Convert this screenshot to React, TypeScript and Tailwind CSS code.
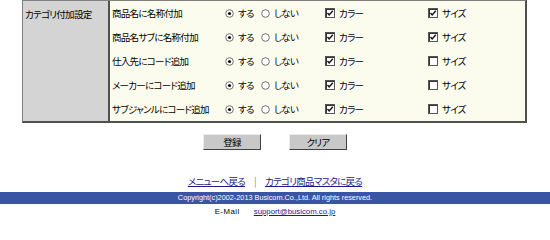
import React from 'react';

const jp = "font-['Noto_Sans_CJK_JP','Noto_Sans',sans-serif] [font-feature-settings:'palt']";

interface Row {
  name: string;
  color: boolean;
  size: boolean;
}

const rows: Row[] = [
  { name: '商品名に名称付加', color: true, size: true },
  { name: '商品名サブに名称付加', color: true, size: true },
  { name: '仕入先にコード追加', color: true, size: false },
  { name: 'メーカーにコード追加', color: true, size: false },
  { name: 'サブジャンルにコード追加', color: true, size: false },
];

function Radio({ checked }: { checked: boolean }) {
  return (
    <svg width="9" height="9" viewBox="0 0 9 9" className="shrink-0">
      <circle cx="4.5" cy="4.5" r="3.8" fill="#fff" stroke="#6f6f6f" strokeWidth="1" />
      {checked && <circle cx="4.5" cy="4.5" r="1.6" fill="#111" />}
    </svg>
  );
}

function Check({ checked }: { checked: boolean }) {
  return (
    <svg width="10" height="10" viewBox="0 0 10 10" className="shrink-0">
      <rect x="0.5" y="0.5" width="9" height="9" fill="#fff" stroke="#555" />
      <path d="M1 1.5H9M1.5 1V9" stroke="#333" strokeWidth="1" />
      {checked && <path d="M2.5 5 L4.2 7 L7.8 2.8" fill="none" stroke="#111" strokeWidth="1.4" />}
    </svg>
  );
}

export default function App() {
  return (
    <div className={`w-[550px] h-[228px] bg-white text-black text-[9.5px] leading-[12px] tracking-[-0.7px] overflow-hidden ${jp}`}>
      {/* settings table */}
      <div className="ml-[22px] w-[505px] flex border-t border-l border-[#808080] border-r-2 border-b-2 border-r-[#505050] border-b-[#505050]">
        <div className="w-[87px] shrink-0 bg-[#d4d4d4] border-r-2 border-[#505050] pl-[2px] pt-[7px]">
          カテゴリ付加設定
        </div>
        <div className="flex-1 bg-[#fcfcee]">
          {rows.map((r) => (
            <div key={r.name} className="h-[24px] grid grid-cols-[115px_36px_64px_103px_1fr] items-center">
              <span className="pl-[2px] whitespace-nowrap">{r.name}</span>
              <span className="flex items-center gap-[4px]">
                <Radio checked />
                <span>する</span>
              </span>
              <span className="flex items-center gap-[4px]">
                <Radio checked={false} />
                <span>しない</span>
              </span>
              <span className="flex items-center gap-[4px]">
                <Check checked={r.color} />
                <span>カラー</span>
              </span>
              <span className="flex items-center gap-[4px]">
                <Check checked={r.size} />
                <span>サイズ</span>
              </span>
            </div>
          ))}
        </div>
      </div>

      {/* buttons */}
      <div className="flex justify-center gap-[28px] mt-[11px]">
        <button className="w-[58px] h-[16px] bg-[#c8c8c8] border border-t-[#ececec] border-l-[#ececec] border-r-[#404040] border-b-[#404040] leading-[12px]">
          登録
        </button>
        <button className="w-[58px] h-[16px] bg-[#c8c8c8] border border-t-[#ececec] border-l-[#ececec] border-r-[#404040] border-b-[#404040] leading-[12px]">
          クリア
        </button>
      </div>

      {/* links */}
      <div className="flex justify-center items-center gap-[9px] mt-[25px] h-[12px]">
        <a className="text-[#1c1c8a] underline">メニューへ戻る</a>
        <span className="text-[#888]">|</span>
        <a className="text-[#1c1c8a] underline">カテゴリ商品マスタに戻る</a>
      </div>

      {/* footer */}
      <div className="mt-[5px] h-[12px] bg-[#3a55a4] flex items-center justify-center text-white text-[7.3px] leading-[12px] tracking-normal font-['Liberation_Sans',sans-serif]">
        Copyright(c)2002-2013 Busicom.Co.,Ltd. All rights reserved.
      </div>
      <div className="flex justify-center items-center gap-[14px] h-[16px] text-[7.8px] tracking-normal font-['Liberation_Sans',sans-serif]">
        <span className="tracking-[0.5px]">E-Mail</span>
        <a className="text-[#1c1c8a] underline">support@busicom.co.jp</a>
      </div>
    </div>
  );
}
